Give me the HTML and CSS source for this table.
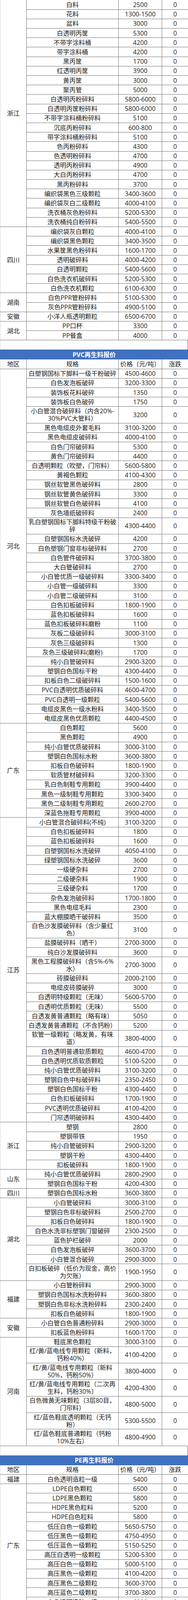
FILE: index.html
```html
<!DOCTYPE html>
<html lang="zh-CN">
<head>
<meta charset="utf-8">
<title>再生料报价</title>
<link rel="stylesheet" href="styles.css">
</head>
<body>
<table class="t t-first">
<colgroup><col class="c1"><col class="c2"><col class="c3"><col class="c4"></colgroup>
<tbody>
<tr><td class="rg" rowspan="24">浙江</td><td>白料</td><td>2500</td><td>0</td></tr>
<tr><td>花料</td><td>1300-1500</td><td>0</td></tr>
<tr><td>盆料</td><td>3000</td><td>0</td></tr>
<tr><td>白透明丙筐</td><td>5300</td><td>0</td></tr>
<tr><td>不带字涂料桶</td><td>4200</td><td>0</td></tr>
<tr><td>带字涂料桶</td><td>4200</td><td>0</td></tr>
<tr><td>黑丙筐</td><td>1700</td><td>0</td></tr>
<tr><td>红透明丙筐</td><td>3900</td><td>0</td></tr>
<tr><td>黄丙筐</td><td>3000</td><td>0</td></tr>
<tr><td>聚丙管</td><td>5000</td><td>0</td></tr>
<tr><td>白透明丙粉碎料</td><td>5800-6000</td><td>0</td></tr>
<tr><td>白透明丙筐粉碎料</td><td>5800-6000</td><td>0</td></tr>
<tr><td>不带字涂料桶粉碎料</td><td>5100</td><td>0</td></tr>
<tr><td>沉底丙粉碎料</td><td>600-800</td><td>0</td></tr>
<tr><td>带字涂料桶粉碎料</td><td>5100</td><td>0</td></tr>
<tr><td>色丙粉碎料</td><td>4300</td><td>0</td></tr>
<tr><td>色透明粉碎料</td><td>4700</td><td>0</td></tr>
<tr><td>透明丙粉碎料</td><td>4900</td><td>0</td></tr>
<tr><td>大白丙粉碎料</td><td>4700</td><td>0</td></tr>
<tr><td>黑丙粉碎料</td><td>3700</td><td>0</td></tr>
<tr><td>编织袋黑色三级颗粒</td><td>3400-3600</td><td>0</td></tr>
<tr><td>编织袋灰白二级颗粒</td><td>4000-4100</td><td>0</td></tr>
<tr><td>洗衣桶灰色粉碎料</td><td>5200-5300</td><td>0</td></tr>
<tr><td>洗衣桶纯白粉碎料</td><td>5400-5500</td><td>0</td></tr>
<tr><td class="rg" rowspan="7">四川</td><td>编织袋灰白颗粒</td><td>4000-4100</td><td>0</td></tr>
<tr><td>编织袋黑色颗粒</td><td>3400-3500</td><td>0</td></tr>
<tr><td>水果筐黑色粉碎料</td><td>1600-1700</td><td>0</td></tr>
<tr><td>透明破碎料</td><td>4000-4200</td><td>0</td></tr>
<tr><td>白透明颗粒</td><td>5400-5600</td><td>0</td></tr>
<tr><td>白色洗衣机破碎料</td><td>5200-5300</td><td>0</td></tr>
<tr><td>白色洗衣机颗粒</td><td>6100-6300</td><td>0</td></tr>
<tr><td class="rg" rowspan="2">湖南</td><td>白色PPR管粉碎料</td><td>5100-5300</td><td>0</td></tr>
<tr><td>灰色PPR管粉碎料</td><td>4900-5100</td><td>0</td></tr>
<tr><td class="rg">安徽</td><td>小洋人瓶透明颗粒</td><td>6500-6700</td><td>0</td></tr>
<tr><td class="rg" rowspan="2">湖北</td><td>PP口杯</td><td>3300</td><td>0</td></tr>
<tr><td>PP餐盒</td><td>4000</td><td>0</td></tr>
</tbody>
</table>

<div class="gap"></div>

<table class="t">
<colgroup><col class="c1"><col class="c2"><col class="c3"><col class="c4"></colgroup>
<thead>
<tr class="title"><th colspan="4">PVC再生料报价</th></tr>
<tr class="head"><th class="rg">地区</th><th>规格</th><th>价格（元/吨）</th><th>涨跌</th></tr>
</thead>
<tbody>
<tr><td class="rg" rowspan="36">河北</td><td>白塑钢国标下脚料一级干粉破碎</td><td>4500-4600</td><td>0</td></tr>
<tr><td>白色发泡板破碎</td><td>3200-3300</td><td>0</td></tr>
<tr><td>装饰板花料破碎</td><td>1350</td><td>0</td></tr>
<tr><td>装饰板白色破碎</td><td>1750</td><td>0</td></tr>
<tr class="w"><td>小白管混合破碎料（内含20%-<br>30%PVC大管料）</td><td>3200</td><td>0</td></tr>
<tr><td>黑色电缆皮外套毛料</td><td>3100-3200</td><td>0</td></tr>
<tr><td>黑色电缆皮破碎料</td><td>4000-4100</td><td>0</td></tr>
<tr><td>白色门帘破碎料</td><td>5300</td><td>0</td></tr>
<tr><td>黄色门帘破碎料</td><td>4400</td><td>0</td></tr>
<tr><td>白透明颗粒（吹塑，门帘料）</td><td>5600-5800</td><td>0</td></tr>
<tr><td>黄褐色颗粒</td><td>4100-4300</td><td>0</td></tr>
<tr><td>钢丝软管黑色破碎料</td><td>2800</td><td>0</td></tr>
<tr><td>钢丝软管黄色破碎料</td><td>3300</td><td>0</td></tr>
<tr><td>钢丝软管白色破碎料</td><td>4100</td><td>0</td></tr>
<tr><td>灰色墙纸破碎料</td><td>2400</td><td>0</td></tr>
<tr class="w"><td>乳白塑钢国标下脚料特级干粉破<br>碎</td><td>4300-4400</td><td>0</td></tr>
<tr><td>白塑钢国标水洗破碎</td><td>4200</td><td>0</td></tr>
<tr><td>白色塑钢门窗非标破碎料</td><td>2700</td><td>0</td></tr>
<tr><td>白色管件破碎料</td><td>3700-3800</td><td>0</td></tr>
<tr><td>大白管破碎料</td><td>2700</td><td>0</td></tr>
<tr><td>小白管优质一级破碎料</td><td>3300-3400</td><td>0</td></tr>
<tr><td>小白管一级破碎料</td><td>3300</td><td>0</td></tr>
<tr><td>小白管二级破碎料</td><td>3100</td><td>0</td></tr>
<tr><td>白色扣板破碎料</td><td>1800-1900</td><td>0</td></tr>
<tr><td>蓝色扣板破碎料</td><td>1600</td><td>0</td></tr>
<tr><td>蓝色扣板破碎料磨粉</td><td>1100</td><td>0</td></tr>
<tr><td>灰板二级破碎料</td><td>3000-3100</td><td>0</td></tr>
<tr><td>灰色三级破碎料</td><td>1300</td><td>0</td></tr>
<tr><td>灰色三级破碎料(磨粉)</td><td>1700</td><td>0</td></tr>
<tr><td>纯小白管破碎料</td><td>2900-3200</td><td>0</td></tr>
<tr><td>塑钢白色国标干粉</td><td>4300-4400</td><td>0</td></tr>
<tr><td>扣板白色二级破碎料</td><td>1500-1600</td><td>0</td></tr>
<tr><td>PVC白透明优质破碎料</td><td>4600-4700</td><td>0</td></tr>
<tr><td>PVC白透明一级颗粒</td><td>5400-5600</td><td>0</td></tr>
<tr><td>电缆皮黑色一级水粉料</td><td>3400-3500</td><td>0</td></tr>
<tr><td>电缆皮黑色优质颗粒</td><td>4400-4500</td><td>0</td></tr>

<tr><td class="rg" rowspan="10">广东</td><td>白色颗粒</td><td>5600</td><td>0</td></tr>
<tr><td>黑色颗粒</td><td>4900</td><td>0</td></tr>
<tr><td>纯小白管优质破碎料</td><td>3000-3100</td><td>0</td></tr>
<tr><td>塑钢白色国标水粉</td><td>3600-3800</td><td>0</td></tr>
<tr><td>扣板白色破碎料</td><td>1800-1900</td><td>0</td></tr>
<tr><td>软质管材破碎料</td><td>3200-3300</td><td>0</td></tr>
<tr><td>乳白色制鞋专用颗粒</td><td>3900-4400</td><td>0</td></tr>
<tr><td>黑色一级制鞋专用颗粒</td><td>3300-3400</td><td>0</td></tr>
<tr><td>黑色二级制鞋专用颗粒</td><td>2600-2700</td><td>0</td></tr>
<tr><td>深蓝色拖鞋专用颗粒</td><td>3900-4000</td><td>0</td></tr>

<tr><td class="rg" rowspan="30">江苏</td><td>小白管混合破碎料(不纯)</td><td>3100-3200</td><td>0</td></tr>
<tr><td>白色扣板破碎料</td><td>1800</td><td>0</td></tr>
<tr><td>蓝色扣板破碎料</td><td>1600</td><td>0</td></tr>
<tr><td>白塑钢国标水洗破碎</td><td>4050-4100</td><td>0</td></tr>
<tr><td>绿塑钢国标水洗破碎</td><td>3600</td><td>0</td></tr>
<tr><td>一级硬杂料</td><td>2700</td><td>0</td></tr>
<tr><td>二级硬杂料</td><td>1900</td><td>0</td></tr>
<tr><td>三级硬杂料</td><td>1700</td><td>0</td></tr>
<tr><td>杂色发泡破碎料</td><td>1700-1800</td><td>0</td></tr>
<tr><td>黑色电缆毛料</td><td>2300</td><td>0</td></tr>
<tr><td>蓝大棚膜晒干破碎料</td><td>3500</td><td>0</td></tr>
<tr class="w"><td>白色沙发膜破碎料（含少量红<br>色）</td><td>3100</td><td>0</td></tr>
<tr><td>盐膜破碎料（晒干）</td><td>2700-3000</td><td>0</td></tr>
<tr><td>纯白沙发膜破碎料</td><td>3600</td><td>0</td></tr>
<tr class="w"><td>黑色工程膜破碎料（含5%-6%<br>水）</td><td>2700-3000</td><td>0</td></tr>
<tr><td>砖膜破碎料</td><td>2000-2100</td><td>0</td></tr>
<tr><td>电缆皮砖膜破碎</td><td>3000</td><td>0</td></tr>
<tr><td>白透明特级颗粒（无味）</td><td>5600-5700</td><td>0</td></tr>
<tr><td>白透明优质颗粒（无味）</td><td>5500</td><td>0</td></tr>
<tr><td>白透发黄普通颗粒（略有味）</td><td>5050</td><td>0</td></tr>
<tr><td>白透发黄普通颗粒（不含钙粉）</td><td>5200</td><td>0</td></tr>
<tr class="w"><td>软管一级颗粒（略发黄，有味<br>道）</td><td>3800-4000</td><td>0</td></tr>
<tr><td>白色透明普通软质颗粒</td><td>4600-4700</td><td>0</td></tr>
<tr><td>白色透明优质软质颗粒</td><td>5100-5200</td><td>0</td></tr>
<tr><td>纯小白管优质破碎料</td><td>3100-3200</td><td>0</td></tr>
<tr><td>塑钢白色中标破碎料</td><td>2350-2450</td><td>0</td></tr>
<tr><td>塑钢白色国标干粉</td><td>4300-4400</td><td>0</td></tr>
<tr><td>白色扣板破碎料</td><td>1700-1900</td><td>0</td></tr>
<tr><td>PVC透明优质破碎料</td><td>4100-4200</td><td>0</td></tr>
<tr><td>门帘透明破碎料</td><td>4300-4400</td><td>0</td></tr>

<tr><td class="rg" rowspan="5">浙江</td><td>塑钢</td><td>2800</td><td>0</td></tr>
<tr><td>塑钢带铁</td><td>1950</td><td>0</td></tr>
<tr><td>纯小白管破碎料</td><td>2900-3200</td><td>0</td></tr>
<tr><td>塑钢干粉</td><td>4300-4400</td><td>0</td></tr>
<tr><td>扣板破碎料</td><td>1800-1900</td><td>0</td></tr>

<tr><td class="rg" rowspan="2">山东</td><td>纯小白管优质破碎料</td><td>2800-2900</td><td>0</td></tr>
<tr><td>塑钢白色国标干粉</td><td>4200-4300</td><td>0</td></tr>

<tr><td class="rg">四川</td><td>塑钢白色国标水粉</td><td>3600-3800</td><td>0</td></tr>

<tr><td class="rg" rowspan="8">湖北</td><td>小白管破碎料</td><td>3000-3100</td><td>0</td></tr>
<tr><td>塑钢白色非标破碎料</td><td>2500-2700</td><td>0</td></tr>
<tr><td>扣板白色破碎料</td><td>1800-1900</td><td>0</td></tr>
<tr><td>白色水洗非标塑钢门窗破碎</td><td>2300-2500</td><td>0</td></tr>
<tr><td>蓝色护栏破碎</td><td>2000</td><td>0</td></tr>
<tr><td>白色发泡板破碎</td><td>3600-3700</td><td>0</td></tr>
<tr><td>小白管混合破碎</td><td>2900-3000</td><td>0</td></tr>
<tr class="w"><td>白扣板破碎（低价为现金，高价<br>为欠账）</td><td>1900-1950</td><td>0</td></tr>

<tr><td class="rg" rowspan="4">福建</td><td>小白管粉碎料</td><td>2900-3000</td><td>0</td></tr>
<tr><td>塑钢白色国标水洗粉碎料</td><td>3600-3800</td><td>0</td></tr>
<tr><td>塑钢白色非标水洗粉碎料</td><td>2300-2400</td><td>0</td></tr>
<tr><td>扣板白色破碎料</td><td>1800-1900</td><td>0</td></tr>

<tr><td class="rg" rowspan="2">安徽</td><td>小白管白色普通粉碎料</td><td>2900-3000</td><td>0</td></tr>
<tr><td>扣板蓝色粉碎料</td><td>1600-1700</td><td>0</td></tr>

<tr><td class="rg" rowspan="7">河南</td><td>鞋底黑色颗粒</td><td>3000-3100</td><td>0</td></tr>
<tr class="w"><td>红/黄/蓝电线专用颗粒（新料，<br>钙粉40%）</td><td>4100-4200</td><td>0</td></tr>
<tr class="w"><td>红/黄/蓝电线专用颗粒（新料<br>50%，钙粉50%）</td><td>3800-4000</td><td>0</td></tr>
<tr class="w"><td>红/黄/蓝电线专用颗粒（二次再<br>生料，钙粉30%）</td><td>4200-4300</td><td>0</td></tr>
<tr class="w"><td>白色微黄无味颗粒（3层80目，<br>门帘料）</td><td>4800-5000</td><td>0</td></tr>
<tr class="w"><td>红/蓝色鞋底透明颗粒（无钙<br>粉）</td><td>5300-5500</td><td>0</td></tr>
<tr class="w"><td>红/蓝色鞋底普通颗粒（钙粉<br>10%左右）</td><td>4800-4900</td><td>0</td></tr>
</tbody>
</table>

<div class="gap"></div>

<table class="t">
<colgroup><col class="c1"><col class="c2"><col class="c3"><col class="c4"></colgroup>
<thead>
<tr class="title"><th colspan="4">PE再生料报价</th></tr>
<tr class="head"><th class="rg">地区</th><th>规格</th><th>价格（元/吨）</th><th>涨跌</th></tr>
</thead>
<tbody>
<tr><td class="rg">福建</td><td>白色透明造粒一级</td><td>5400</td><td>0</td></tr>
<tr><td class="rg" rowspan="13">广东</td><td>LDPE白色颗粒</td><td>6500</td><td>0</td></tr>
<tr><td>LDPE黑色颗粒</td><td>5800</td><td>0</td></tr>
<tr><td>HDPE黑色粒料</td><td>5200</td><td>0</td></tr>
<tr><td>HDPE白色粒料</td><td>5800</td><td>0</td></tr>
<tr><td>低压白色一级颗粒</td><td>5650-5750</td><td>0</td></tr>
<tr><td>低压黑色一级颗粒</td><td>4750-4950</td><td>0</td></tr>
<tr><td>低压蓝色一级颗粒</td><td>5150-5250</td><td>0</td></tr>
<tr><td>高压白透明一级颗粒</td><td>5200-5300</td><td>0</td></tr>
<tr><td>高压白色一级颗粒</td><td>5000-5100</td><td>0</td></tr>
<tr><td>高压黑色一级颗粒</td><td>4100-4200</td><td>0</td></tr>
<tr><td>高压黑色二级颗粒</td><td>3600-3700</td><td>0</td></tr>
<tr><td>高压蓝色二级颗粒</td><td>3700-3800</td><td>0</td></tr>
<tr><td>白色透明造粒一级</td><td>6000</td><td>0</td></tr>
</tbody>
</table>
</body>
</html>
```

FILE: styles.css
```css
html, body {
  margin: 0;
  padding: 0;
  background: #ffffff;
}

body {
  width: 480px;
  font-family: "Open Sans", "Noto Sans CJK SC", sans-serif;
  font-size: 16px;
  color: #1c1c1c;
}

.t {
  width: 480px;
  border-collapse: collapse;
  table-layout: fixed;
}

.c1 { width: 67px; }
.c2 { width: 235px; }
.c3 { width: 111px; }
.c4 { width: 67px; }

.t tr {
  height: 24.2px;
}

.t tr.w {
  height: 42.3px;
}

.t td,
.t th {
  border: 1px solid #707070;
  padding: 0;
  text-align: center;
  vertical-align: middle;
  white-space: nowrap;
  font-weight: normal;
  line-height: 20px;
}

.t tr.w td {
  line-height: 19px;
}

.t .rg {
  border-left-color: #d4d4d4;
}

.t td:last-child,
.t th:last-child {
  border-right-color: #606060;
}

.t-first tr:first-child td {
  border-top: none;
}

.t .title th {
  background: #4071c0;
  color: #ffffff;
  font-weight: bold;
  border-color: #2e569a;
  border-left-color: #4071c0;
}

.gap {
  height: 24px;
  border-left: 1px solid #d4d4d4;
  border-right: 1px solid #606060;
}
```
